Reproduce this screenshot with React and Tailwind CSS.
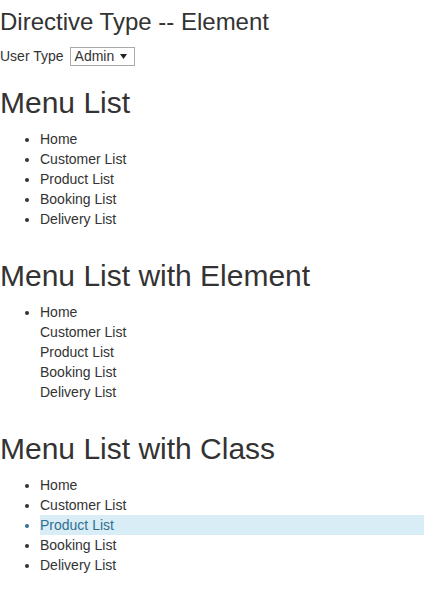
const items = ['Home', 'Customer List', 'Product List', 'Booking List', 'Delivery List']

function Heading({ children, className = '' }) {
  return <h2 className={`text-[30px] leading-[33px] font-normal ${className}`}>{children}</h2>
}

export default function App() {
  return (
    <div className="min-h-screen bg-white text-[#333] text-[14px] leading-[20px] font-['Liberation_Sans',Arial,sans-serif]">
      <h3 className="text-[24px] leading-[26.4px] font-normal pt-[9px] mb-[11px]">Directive Type -- Element</h3>

      <div className="flex items-center h-[20px]">
        <span>User Type</span>
        <span className="ml-[6px] flex items-center h-[19px] w-[65px] border border-[#a9a9a9] pl-[4px] pr-[7px] justify-between">
          <span>Admin</span>
          <svg width="7" height="5" viewBox="0 0 7 5"><path d="M0 0h7L3.5 5z" fill="#222" /></svg>
        </span>
      </div>

      <Heading className="mt-[20px] mb-[10px]">Menu List</Heading>
      <ul className="list-disc pl-[40px] mb-[30px]">
        {items.map((t) => <li key={t}>{t}</li>)}
      </ul>

      <Heading className="mb-[10px]">Menu List with Element</Heading>
      <ul className="pl-[40px] mb-[30px]">
        {items.map((t, i) => (
          <li key={t} className={i === 0 ? 'list-disc' : 'list-none'}>{t}</li>
        ))}
      </ul>

      <Heading className="mb-[10px]">Menu List with Class</Heading>
      <ul className="list-disc pl-[40px] mb-[10px]">
        {items.map((t) => (
          <li key={t} className={t === 'Product List' ? 'bg-[#d9edf7] text-[#31708f]' : ''}>{t}</li>
        ))}
      </ul>
    </div>
  )
}
